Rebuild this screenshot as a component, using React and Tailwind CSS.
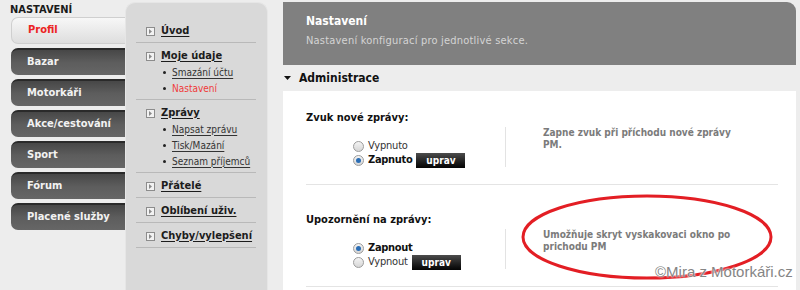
import React from 'react';

const font = "font-['DejaVu_Sans_Condensed','DejaVu_Sans',sans-serif]";

const tabs = [
    { label: 'Profil', active: true },
    { label: 'Bazar' },
    { label: 'Motorkáři' },
    { label: 'Akce/cestování' },
    { label: 'Sport' },
    { label: 'Fórum' },
    { label: 'Placené služby' },
];

const menu = [
    { title: 'Úvod' },
    { title: 'Moje údaje', items: [{ label: 'Smazání účtu' }, { label: 'Nastavení', active: true }] },
    { title: 'Zprávy', items: [{ label: 'Napsat zprávu' }, { label: 'Tisk/Mazání' }, { label: 'Seznam příjemců' }] },
    { title: 'Přátelé' },
    { title: 'Oblíbení uživ.' },
    { title: 'Chyby/vylepšení' },
];

const Tab = ({ label, active }) => (
    <div
        className={
            active
                ? 'h-[27px] rounded-l-[7px] border border-r-0 border-[#cfcfcf] bg-gradient-to-b from-[#f7f7f7] to-[#dedede] pl-[16px] flex items-center text-[11px] font-bold text-[#ec2323]'
                : 'h-[27px] rounded-l-[7px] border-t-2 border-[#2a2a2a] bg-gradient-to-b from-[#474747] via-[#5d5d5d] to-[#666666] pl-[16px] flex items-center text-[11px] font-bold text-[#f2f2f2]'
        }
    >
        {label}
    </div>
);

const MenuIcon = () => (
    <span className="w-[9px] h-[9px] border border-[#8c8c8c] bg-[#f2f2f2] flex items-center justify-center shrink-0">
        <svg width="3" height="5" viewBox="0 0 3 5">
            <path d="M0 0 L3 2.5 L0 5 Z" fill="#8a8a8a" />
        </svg>
    </span>
);

const MenuSection = ({ title, items }) => (
    <div className="pt-[5px] pb-[3px] border-b border-[#b9b9b9]">
        <div className="h-[16px] flex items-center pl-[10px] gap-[6px]">
            <MenuIcon />
            <span className="text-[11px] font-bold text-[#1c1c1c] underline underline-offset-2">{title}</span>
        </div>
        {items &&
            items.map((it) => (
                <div key={it.label} className="h-[16px] flex items-center pl-[27px] gap-[6px]">
                    <span className="w-[3px] h-[3px] rounded-full bg-[#222] shrink-0" />
                    <span
                        className={
                            it.active
                                ? 'text-[10px] text-[#f03a3a]'
                                : 'text-[10px] text-[#333] underline underline-offset-2'
                        }
                    >
                        {it.label}
                    </span>
                </div>
            ))}
    </div>
);

const Radio = ({ checked }) => (
    <span className="w-[11px] h-[11px] rounded-full border border-[#9c9c9c] bg-gradient-to-b from-[#f4f4f4] to-[#d6d6d6] flex items-center justify-center shrink-0">
        {checked && <span className="w-[5px] h-[5px] rounded-full bg-[#2a6db5]" />}
    </span>
);

const EditButton = () => (
    <span className="ml-[4px] w-[49px] h-[15px] bg-gradient-to-b from-[#4d4d4d] to-[#050505] text-white text-[10px] font-bold flex items-center justify-center">
        uprav
    </span>
);

const Option = ({ label, checked, withButton }) => (
    <div className="h-[14px] flex items-center">
        <Radio checked={checked} />
        <span
            className={
                checked
                    ? 'ml-[4px] text-[11px] font-bold text-[#111] tracking-[-0.3px]'
                    : 'ml-[4px] text-[11px] text-[#333] tracking-[-0.2px]'
            }
        >
            {label}
        </span>
        {withButton && <EditButton />}
    </div>
);

const Setting = ({ label, options, desc, className }) => (
    <div className={`pb-[17px] border-b border-[#e4e4e4] ${className}`}>
        <div className="h-[14px] leading-[14px] text-[11px] font-bold text-[#111]">{label}</div>
        <div className="mt-[2px] h-[40px] flex">
            <div className="w-[199px] pl-[47px] flex flex-col justify-end">
                {options.map((o, i) => (
                    <Option key={o.label} {...o} withButton={i === options.length - 1} />
                ))}
            </div>
            <div className="border-l border-[#e3e3e3] pl-[37px] text-[10px] font-bold text-[#7b7b7b] leading-[12px]">
                {desc.map((line) => (
                    <div key={line}>{line}</div>
                ))}
            </div>
        </div>
    </div>
);

export default function App() {
    return (
        <div className={`relative w-[800px] h-[290px] overflow-hidden bg-[#ededed] flex ${font}`}>
            {/* left tabs */}
            <aside className="w-[125px] shrink-0 pl-[11px] pt-[4px]">
                <div className="-ml-[1px] h-[12px] leading-[12px] text-[11px] font-bold text-[#1a1a1a]">NASTAVENÍ</div>
                <div className="mt-[1px] flex flex-col gap-[4px]">
                    {tabs.map((t) => (
                        <Tab key={t.label} {...t} />
                    ))}
                </div>
            </aside>

            {/* submenu panel */}
            <nav className="mt-[2px] w-[143px] h-[300px] shrink-0 rounded-t-[10px] border border-b-0 border-[#e6e6e6] bg-[#d9d9d9] pl-[10px] pr-[11px] pt-[15px]">
                {menu.map((m) => (
                    <MenuSection key={m.title} {...m} />
                ))}
            </nav>

            {/* content */}
            <main className="ml-[15px] mt-[2px] w-[513px] flex flex-col">
                <div className="h-[63px] bg-[#808080] rounded-tr-[9px] px-[23px] pt-[11px]">
                    <div className="h-[16px] leading-[16px] text-[12px] font-bold text-white">Nastavení</div>
                    <div className="mt-[5px] h-[14px] leading-[14px] text-[11px] tracking-[0.2px] text-[#d4d4d4]">
                        Nastavení konfigurací pro jednotlivé sekce.
                    </div>
                </div>
                <div className="h-[26px] flex items-center gap-[8px] pl-[1px]">
                    <svg width="7" height="4" viewBox="0 0 7 4">
                        <path d="M0 0 L7 0 L3.5 4 Z" fill="#111" />
                    </svg>
                    <span className="text-[12px] font-bold text-[#111]">Administrace</span>
                </div>
                <div className="flex-1 bg-white pl-[23px] pr-[18px]">
                    <Setting
                        className="pt-[20px]"
                        label="Zvuk nové zprávy:"
                        options={[{ label: 'Vypnuto' }, { label: 'Zapnuto', checked: true }]}
                        desc={['Zapne zvuk při příchodu nové zprávy', 'PM.']}
                    />
                    <Setting
                        className="pt-[28px]"
                        label="Upozornění na zprávy:"
                        options={[{ label: 'Zapnout', checked: true }, { label: 'Vypnout' }]}
                        desc={['Umožňuje skryt vyskakovaci okno po', 'prichodu PM']}
                    />
                </div>
            </main>

            {/* annotation overlay */}
            <svg className="absolute left-[521px] top-[194px]" width="252" height="86" viewBox="0 0 252 86">
                <ellipse cx="126" cy="43" rx="124" ry="41" fill="none" stroke="#e31e24" strokeWidth="3" />
            </svg>
            <div className="absolute left-[655px] top-[263px] text-[15px] leading-[18px] font-['Liberation_Sans',sans-serif] text-[#858585] [text-shadow:0_0_2px_#fff,0_0_2px_#fff]">
                ©Mira z Motorkáři.cz
            </div>
        </div>
    );
}
